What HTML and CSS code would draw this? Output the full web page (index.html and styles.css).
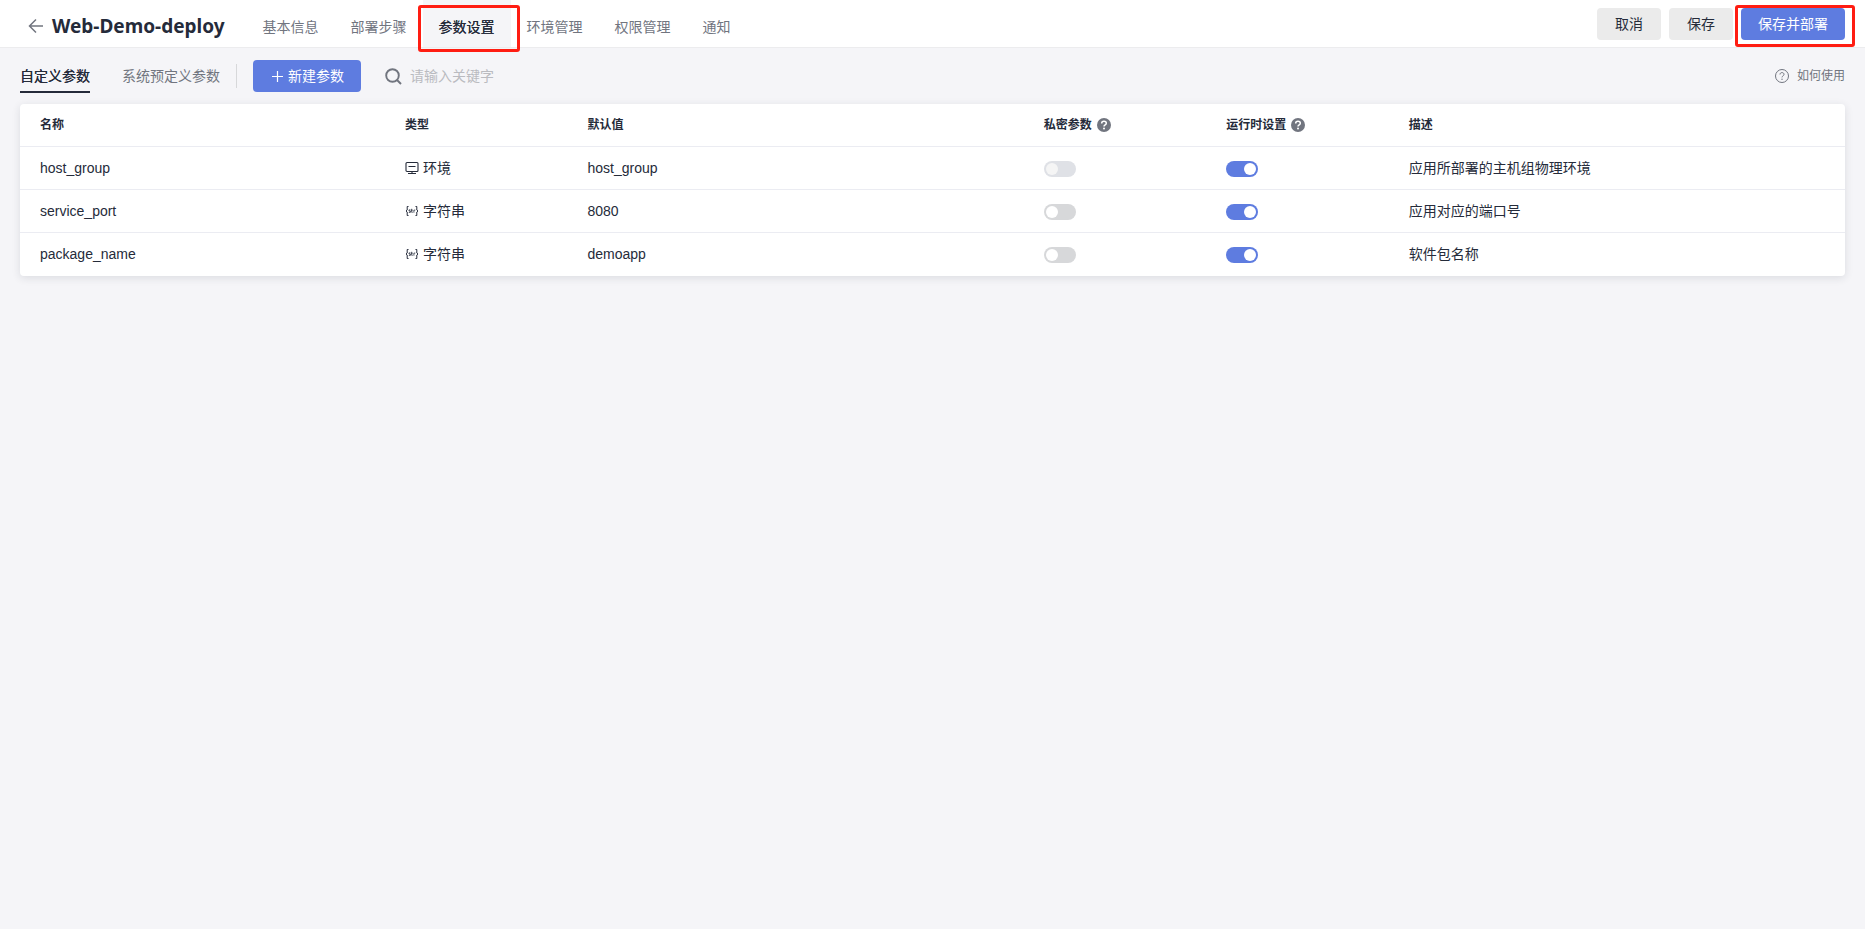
FILE: index.html
```html
<!DOCTYPE html>
<html lang="zh-CN">
<head>
<meta charset="utf-8">
<title>Web-Demo-deploy</title>
<link rel="stylesheet" href="styles.css">
</head>
<body>
<svg class="sprite" aria-hidden="true">
  <symbol id="monitor" viewBox="0 0 14 14"><path d="M2 1.500h10a1 1 0 0 1 1 1v7a1 1 0 0 1-1 1H2a1 1 0 0 1-1-1v-7a1 1 0 0 1 1-1zM3.500 5.500h7M7 10.500v2M3 12.500h8" fill="none" stroke="currentColor" stroke-width="1.100"/></symbol>
  <symbol id="braces" viewBox="0 0 14 14"><path d="M3.500 2.500H2.200V6L1 7l1.200 1v3.500h1.300M10.500 2.500h1.300V6L13 7l-1.200 1v3.500h-1.300" fill="none" stroke="currentColor"/><path d="M5.500 5.900H4v1.100h1.400v1.400H3.800M6.700 4.800v3.500h1M6 6.200h1.700M8.900 8.700V6.100h1.400" fill="none" stroke="currentColor" stroke-width=".8"/></symbol>
  <symbol id="question" viewBox="0 0 14 14"><circle cx="7" cy="7" r="7" fill="#71757f"/><path d="M4.700 5.400c0-1.400.9-2.100 2.300-2.100s2.300.8 2.300 2c0 1.600-2.300 1.500-2.300 3.200" fill="none" stroke="#fff" stroke-width="1.500"/><circle cx="7" cy="10.600" r="1" fill="#fff"/></symbol>
</svg>

<header class="header">
  <button class="back" type="button" aria-label="返回">
    <svg width="16" height="16" viewBox="0 0 16 16"><path d="M15 8H1.500M8 1.500 1.500 8 8 14.500" fill="none" stroke="currentColor" stroke-width="1.500"/></svg>
  </button>
  <h1 class="title">Web-Demo-deploy</h1>
  <nav class="nav">
    <a class="nav-item" href="#">基本信息</a>
    <a class="nav-item" href="#">部署步骤</a>
    <a class="nav-item active" href="#">参数设置<span class="mark mark-tab"></span></a>
    <a class="nav-item" href="#">环境管理</a>
    <a class="nav-item" href="#">权限管理</a>
    <a class="nav-item" href="#">通知</a>
  </nav>
  <div class="actions">
    <button class="btn" type="button">取消</button>
    <button class="btn" type="button">保存</button>
    <button class="btn primary" type="button">保存并部署<span class="mark mark-button"></span></button>
  </div>
</header>

<main class="main">
  <div class="toolbar">
    <div class="tabs">
      <a class="tab selected" href="#">自定义参数</a>
      <a class="tab" href="#">系统预定义参数</a>
    </div>
    <button class="btn primary create" type="button">
      <svg width="14" height="14" viewBox="0 0 14 14"><path d="M7.500 2v11M2 7.500h11" fill="none" stroke="currentColor" stroke-width="1.200"/></svg>
      新建参数
    </button>
    <label class="search">
      <svg width="17" height="17" viewBox="0 0 17 17"><circle cx="7.500" cy="7.500" r="6.300" fill="none" stroke="currentColor" stroke-width="1.900"/><path d="M12 12l4 4" stroke="currentColor" stroke-width="2"/></svg>
      <input type="text" placeholder="请输入关键字" aria-label="请输入关键字">
    </label>
    <a class="help" href="#">
      <svg width="14" height="14" viewBox="0 0 14 14"><circle cx="7" cy="7" r="6.500" fill="none" stroke="currentColor"/><path d="M5 5.500c0-1.200.8-1.900 2-1.900s2 .7 2 1.800c0 1.400-2 1.500-2 3" fill="none" stroke="currentColor"/><circle cx="7" cy="10.300" r=".7" fill="currentColor"/></svg>
      如何使用
    </a>
  </div>

  <div class="card">
    <table class="table">
      <colgroup><col class="w20"><col class="w10"><col class="w25"><col class="w10"><col class="w10"><col class="w25"></colgroup>
      <thead>
        <tr>
          <th>名称</th><th>类型</th><th>默认值</th>
          <th><span class="cell">私密参数<svg class="hint" width="14" height="14"><use href="#question"/></svg></span></th>
          <th><span class="cell">运行时设置<svg class="hint" width="14" height="14"><use href="#question"/></svg></span></th>
          <th>描述</th>
        </tr>
      </thead>
      <tbody>
        <tr>
          <td>host_group</td>
          <td><span class="cell"><svg width="14" height="14"><use href="#monitor"/></svg>环境</span></td>
          <td>host_group</td>
          <td><input class="switch" type="checkbox" aria-label="私密参数" disabled></td>
          <td><input class="switch" type="checkbox" aria-label="运行时设置" checked></td>
          <td>应用所部署的主机组物理环境</td>
        </tr>
        <tr>
          <td>service_port</td>
          <td><span class="cell"><svg width="14" height="14"><use href="#braces"/></svg>字符串</span></td>
          <td>8080</td>
          <td><input class="switch" type="checkbox" aria-label="私密参数"></td>
          <td><input class="switch" type="checkbox" aria-label="运行时设置" checked></td>
          <td>应用对应的端口号</td>
        </tr>
        <tr>
          <td>package_name</td>
          <td><span class="cell"><svg width="14" height="14"><use href="#braces"/></svg>字符串</span></td>
          <td>demoapp</td>
          <td><input class="switch" type="checkbox" aria-label="私密参数"></td>
          <td><input class="switch" type="checkbox" aria-label="运行时设置" checked></td>
          <td>软件包名称</td>
        </tr>
      </tbody>
    </table>
  </div>
</main>
</body>
</html>
```
FILE: styles.css
```css
* { box-sizing: border-box; }

body {
  margin: 0;
  min-height: 100vh;
  background: #f5f5f8;
  color: #252b3a;
  font: 14px/20px "Liberation Sans", "Noto Sans CJK SC", sans-serif;
}

a { color: inherit; text-decoration: none; }
button, input { font: inherit; }
svg { flex: none; display: block; }
.sprite { position: absolute; width: 0; height: 0; }

.header {
  display: flex;
  height: 48px;
  padding: 0 20px 0 28px;
  background: #fff;
  border-bottom: 1px solid #ececee;
}

.back {
  align-self: center;
  padding: 4px 0 0;
  border: 0;
  background: none;
  color: #71757f;
}

.title {
  margin: 0 22px 0 8px;
  padding-top: 4px;
  font: bold 19px/44px "Noto Sans", "Open Sans", sans-serif;
}

.nav { display: flex; color: #71757f; }

.nav-item {
  position: relative;
  padding: 17px 16px 10px;
}

.nav-item.active {
  background: #f5f5f8;
  color: #252b3a;
  text-shadow: 0 0 0 currentColor;
}

.mark {
  position: absolute;
  z-index: 1;
  border: 3px solid #ff1d12;
  border-radius: 3px;
  pointer-events: none;
}

.mark-tab { inset: 5px -9px -5px -5px; }
.mark-button { inset: -4px -11px -8px -7px; }

.actions {
  display: flex;
  gap: 8px;
  margin: 8px 0 0 auto;
}

.btn {
  position: relative;
  height: 32px;
  min-width: 64px;
  padding: 0 16px;
  border: 1px solid transparent;
  border-radius: 4px;
  background: #ebebeb;
  background-clip: border-box;
  color: #252b3a;
}

.btn.primary { background: #5e7ce0; color: #fff; }

.main { padding: 12px 20px; }

.toolbar { display: flex; align-items: center; height: 32px; }

.tabs {
  display: flex;
  gap: 32px;
  height: 24px;
  padding-right: 16px;
  margin-right: 16px;
  border-right: 1px solid #d7d8da;
  color: #71757f;
}

.tab { height: 29px; padding-top: 2px; }

.tab.selected {
  border-bottom: 2px solid #252b3a;
  color: #252b3a;
  text-shadow: 0 0 0 currentColor;
}

.create { display: flex; align-items: center; gap: 4px; }

.search {
  display: flex;
  align-items: center;
  gap: 8px;
  margin-left: 24px;
  color: #71757f;
}

.search input {
  width: 200px;
  padding: 0;
  border: 0;
  outline: 0;
  background: none;
  color: #252b3a;
}

.search input::placeholder { color: #babbc0; }

.help {
  display: flex;
  align-items: center;
  gap: 8px;
  margin-left: auto;
  color: #71757f;
  font-size: 12px;
}

.card {
  margin-top: 12px;
  border-radius: 4px;
  background: #fff;
  box-shadow: 0 2px 8px rgba(37, 43, 58, 0.12);
}

.table {
  width: 100%;
  border-collapse: separate;
  border-spacing: 0;
  table-layout: fixed;
}

.w20 { width: 20%; }
.w10 { width: 10%; }
.w25 { width: 25%; }

th, td {
  height: 43px;
  padding: 0 20px;
  border-bottom: 1px solid #ebecf2;
  text-align: left;
}

th { font-size: 12px; font-weight: bold; }
tr:last-child td { border-bottom-color: transparent; }
thead tr:last-child th { border-bottom-color: #ebecf2; }

.cell { display: flex; align-items: center; gap: 4px; white-space: nowrap; }
.hint { margin-left: 1px; }

.switch {
  appearance: none;
  display: block;
  width: 32px;
  height: 16px;
  margin: 2px 0 0;
  padding: 2px;
  border-radius: 8px;
  background: #d7d8da;
}

.switch::before {
  content: "";
  display: block;
  width: 12px;
  height: 12px;
  border-radius: 50%;
  background: #fff;
}

.switch:checked { background: #5e7ce0; }
.switch:checked::before { margin-left: auto; }
.switch:disabled { background: #dfe1e6; }
.switch:disabled::before { background: #f5f5f5; }
```
